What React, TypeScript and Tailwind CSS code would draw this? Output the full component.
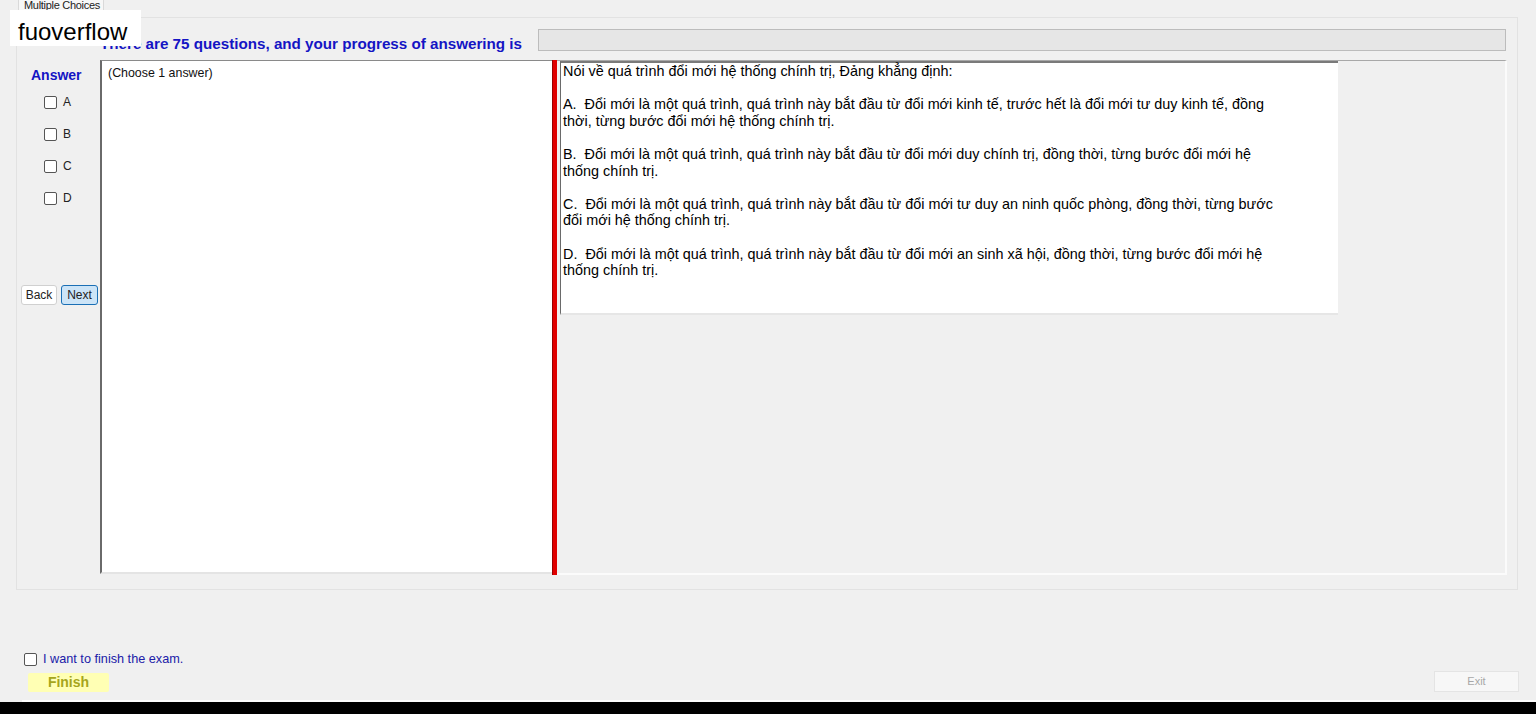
const question = [
  'Nói về quá trình đổi mới hệ thống chính trị, Đảng khẳng định:',
  '',
  'A.  Đổi mới là một quá trình, quá trình này bắt đầu từ đổi mới kinh tế, trước hết là đổi mới tư duy kinh tế, đồng',
  'thời, từng bước đổi mới hệ thống chính trị.',
  '',
  'B.  Đổi mới là một quá trình, quá trình này bắt đầu từ đổi mới duy chính trị, đồng thời, từng bước đổi mới hệ',
  'thống chính trị.',
  '',
  'C.  Đổi mới là một quá trình, quá trình này bắt đầu từ đổi mới tư duy an ninh quốc phòng, đồng thời, từng bước',
  'đổi mới hệ thống chính trị.',
  '',
  'D.  Đổi mới là một quá trình, quá trình này bắt đầu từ đổi mới an sinh xã hội, đồng thời, từng bước đổi mới hệ',
  'thống chính trị.',
];

function Box() {
  return <span className="block w-[13px] h-[13px] rounded-[2px] border border-[#555] bg-white" />;
}

export default function App() {
  return (
    <div className="relative w-[1536px] h-[714px] overflow-hidden flex flex-col bg-[#f0f0f0] text-black font-['Liberation_Sans',Arial,sans-serif]">
      {/* watermark box over the header */}
      <div className="absolute left-[10px] top-[10px] w-[131px] h-[36px] bg-white pl-[8px] text-[24px] leading-[43px] text-black">
        fuoverflow
      </div>

      {/* tab strip */}
      <div className="h-[17px] pl-[18px] flex items-start">
        <div className="w-[86px] h-[17px] -mt-[3px] bg-[#f7f7f7] border-x border-[#d9d9d9] text-[11px] leading-[17px] text-[#222] pl-[5px] tracking-[-0.3px]">
          Multiple Choices
        </div>
      </div>

      {/* tab page */}
      <div className="ml-[16px] w-[1502px] h-[573px] border border-[#e2e2e2] flex flex-col">
        <div className="h-[42px] flex">
          <div className="w-[521px] pl-[83px] pt-[17px] text-[15.2px] leading-[18px] font-bold text-[#1414c4] whitespace-nowrap">
            There are 75 questions, and your progress of answering is
          </div>
          <div className="mt-[11px] w-[968px] h-[22px] bg-[#e6e6e6] border border-[#bcbcbc]" />
        </div>

        <div className="h-[515px] flex">
          {/* answer column */}
          <div className="w-[83px] flex flex-col">
            <div className="pl-[14px] pt-[7px] text-[14px] leading-[16px] font-bold text-[#1414c4]">Answer</div>
            <div className="pl-[27px] pt-[13px] flex flex-col gap-[19px]">
              {['A', 'B', 'C', 'D'].map((l) => (
                <div key={l} className="flex items-center gap-[6px] h-[13px]">
                  <Box />
                  <span className="text-[12px] leading-[13px] text-[#222]">{l}</span>
                </div>
              ))}
            </div>
            <div className="mt-[80px] pl-[4px] flex gap-[4px]">
              <button className="w-[36px] h-[20px] bg-white border border-[#d0d0d0] rounded-[3px] text-[12px] text-[#222]">
                Back
              </button>
              <button className="w-[37px] h-[20px] bg-[#cce4f7] border border-[#1a6fb5] rounded-[3px] text-[12px] text-[#222]">
                Next
              </button>
            </div>
          </div>

          {/* answer text box */}
          <div className="w-[452px] h-[514px] bg-white border-t border-l-2 border-t-[#8a8a8a] border-l-[#6a6a6a] border-b-2 border-b-[#e4e4e4] pl-[6px] pt-[5px] text-[12.4px] leading-[15px] text-[#111]">
            (Choose 1 answer)
          </div>

          {/* splitter */}
          <div className="w-[5px] h-[515px] bg-[#e00000] border-l border-[#9a0000]" />

          {/* question area */}
          <div className="w-[950px] h-[515px] pl-[3px] border-t border-t-[#a8a8a8] border-r-2 border-r-[#fbfbfb] border-b-2 border-b-[#fbfbfb]">
            <div className="w-[778px] h-[254px] bg-white border-t-2 border-t-[#7a7a7a] border-l border-l-[#6a6a6a] border-b-2 border-b-[#e6e6e6] pl-[2px] text-[14.4px] leading-[16.6px]">
              {question.map((line, i) => (
                <div key={i} className="h-[16.6px] whitespace-pre">
                  {line}
                </div>
              ))}
            </div>
          </div>
        </div>
      </div>

      {/* bottom controls */}
      <div className="h-[110px] flex justify-between">
        <div className="pl-[24px] pt-[62px] flex flex-col">
          <div className="flex items-center gap-[6px] h-[14px]">
            <Box />
            <span className="text-[12.7px] leading-[14px] text-[#2020a8]">I want to finish the exam.</span>
          </div>
          <div className="mt-[7px] ml-[4px] w-[81px] h-[19px] bg-[#ffffb4] rounded-[2px] text-[14px] leading-[19px] font-bold text-[#a5a51c] text-center">
            Finish
          </div>
        </div>
        <div className="self-end mb-[8px] mr-[17px] w-[85px] h-[21px] bg-[#f7f7f7] border border-[#e4e4e4] text-[11px] leading-[19px] text-[#a8a8a8] text-center">
          Exit
        </div>
      </div>

      <div className="h-[2px] ml-[22px] bg-white" />
      <div className="h-[12px] bg-black" />
    </div>
  );
}
